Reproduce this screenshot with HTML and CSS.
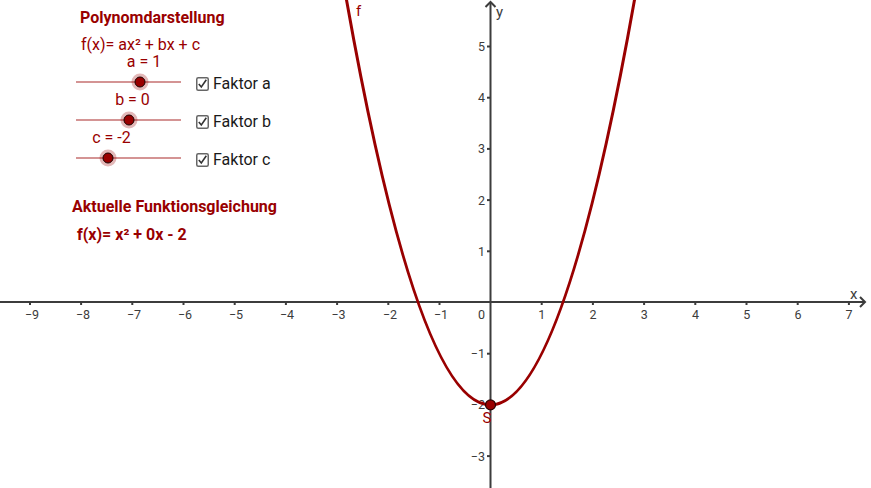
FILE: index.html
```html
<!DOCTYPE html>
<html lang="de">
<head>
<meta charset="utf-8">
<title>Polynomdarstellung</title>
<link rel="stylesheet" href="styles.css">
</head>
<body>
<div class="stage">
  <svg class="graph" width="871" height="488" viewBox="0 0 871 488" xmlns="http://www.w3.org/2000/svg">
    <g class="axes">
      <line x1="0" y1="302" x2="865" y2="302"/>
      <polyline points="860,297 865,302 860,307" fill="none"/>
      <line x1="490.5" y1="488" x2="490.5" y2="2"/>
      <polyline points="485.5,7 490.5,2 495.5,7" fill="none"/>
    </g>
    <g class="ticks">
      <line x1="30" y1="302" x2="30" y2="305"/>
      <line x1="81.1" y1="302" x2="81.1" y2="305"/>
      <line x1="132.3" y1="302" x2="132.3" y2="305"/>
      <line x1="183.5" y1="302" x2="183.5" y2="305"/>
      <line x1="234.7" y1="302" x2="234.7" y2="305"/>
      <line x1="285.9" y1="302" x2="285.9" y2="305"/>
      <line x1="337.1" y1="302" x2="337.1" y2="305"/>
      <line x1="388.3" y1="302" x2="388.3" y2="305"/>
      <line x1="439.5" y1="302" x2="439.5" y2="305"/>
      <line x1="541.7" y1="302" x2="541.7" y2="305"/>
      <line x1="592.9" y1="302" x2="592.9" y2="305"/>
      <line x1="644.1" y1="302" x2="644.1" y2="305"/>
      <line x1="695.3" y1="302" x2="695.3" y2="305"/>
      <line x1="746.5" y1="302" x2="746.5" y2="305"/>
      <line x1="797.7" y1="302" x2="797.7" y2="305"/>
      <line x1="848.9" y1="302" x2="848.9" y2="305"/>
      <line x1="487" y1="46.5" x2="490" y2="46.5"/>
      <line x1="487" y1="97.7" x2="490" y2="97.7"/>
      <line x1="487" y1="148.9" x2="490" y2="148.9"/>
      <line x1="487" y1="200.1" x2="490" y2="200.1"/>
      <line x1="487" y1="251.3" x2="490" y2="251.3"/>
      <line x1="487" y1="353.7" x2="490" y2="353.7"/>
      <line x1="487" y1="404.9" x2="490" y2="404.9"/>
      <line x1="487" y1="456.1" x2="490" y2="456.1"/>
    </g>
    <g class="xlabels">
      <text x="32" y="319">−9</text>
      <text x="83" y="319">−8</text>
      <text x="134" y="319">−7</text>
      <text x="185" y="319">−6</text>
      <text x="236" y="319">−5</text>
      <text x="287" y="319">−4</text>
      <text x="338.5" y="319">−3</text>
      <text x="390" y="319">−2</text>
      <text x="441" y="319">−1</text>
      <text x="541.7" y="319">1</text>
      <text x="593" y="319">2</text>
      <text x="644.3" y="319">3</text>
      <text x="695.5" y="319">4</text>
      <text x="746.7" y="319">5</text>
      <text x="798" y="319">6</text>
      <text x="849" y="319">7</text>
    </g>
    <g class="ylabels">
      <text x="485" y="319">0</text>
      <text x="485" y="51">5</text>
      <text x="485" y="102">4</text>
      <text x="485" y="153">3</text>
      <text x="485" y="204.5">2</text>
      <text x="485" y="255.5">1</text>
      <text x="485" y="358">−1</text>
      <text x="485" y="409">−2</text>
      <text x="485" y="460.5">−3</text>
    </g>
    <text class="axisname" x="850" y="299">x</text>
    <text class="axisname" x="496" y="17">y</text>
    <path class="curve" d="M344.58,-10.97 Q490.5,820.77 636.42,-10.97"/>
    <text class="fname" x="356" y="16">f</text>
    <circle class="vertex" cx="490.5" cy="404.9" r="5"/>
    <text class="sname" x="482.5" y="423">S</text>
  </svg>

  <div class="panel">
    <div class="title t1">Polynomdarstellung</div>
    <div class="formula">f(x)= ax² + bx + c</div>

    <div class="slider">
      <div class="slabel"><span class="val" style="left: 61%">a = 1</span></div>
      <div class="srow">
        <div class="track"><span class="knob" style="left: 61%"></span></div>
        <label class="check">
          <svg class="box" width="13" height="14" viewBox="0 0 13 14"><rect x="0.75" y="0.75" width="11.5" height="12.5" rx="1.5"/><polyline points="2.8,7 5.3,10 10.3,2.8"/></svg>
          <span>Faktor a</span>
        </label>
      </div>
    </div>

    <div class="slider">
      <div class="slabel"><span class="val" style="left: 50%">b = 0</span></div>
      <div class="srow">
        <div class="track"><span class="knob" style="left: 50%"></span></div>
        <label class="check">
          <svg class="box" width="13" height="14" viewBox="0 0 13 14"><rect x="0.75" y="0.75" width="11.5" height="12.5" rx="1.5"/><polyline points="2.8,7 5.3,10 10.3,2.8"/></svg>
          <span>Faktor b</span>
        </label>
      </div>
    </div>

    <div class="slider">
      <div class="slabel"><span class="val" style="left: 30%">c = -2</span></div>
      <div class="srow">
        <div class="track"><span class="knob" style="left: 30%"></span></div>
        <label class="check">
          <svg class="box" width="13" height="14" viewBox="0 0 13 14"><rect x="0.75" y="0.75" width="11.5" height="12.5" rx="1.5"/><polyline points="2.8,7 5.3,10 10.3,2.8"/></svg>
          <span>Faktor c</span>
        </label>
      </div>
    </div>

    <div class="title t2">Aktuelle Funktionsgleichung</div>
    <div class="current">f(x)= x² + 0x - 2</div>
  </div>
</div>
</body>
</html>
```

FILE: styles.css
```css
html, body {
  margin: 0;
  padding: 0;
  background: #ffffff;
}

body {
  width: 871px;
  height: 488px;
  overflow: hidden;
  font-family: Roboto, "Liberation Sans", sans-serif;
}

.stage {
  position: relative;
  width: 871px;
  height: 488px;
}

.graph {
  display: block;
}

.axes line,
.axes polyline {
  stroke: #3c3c3c;
  stroke-width: 2;
}

.ticks line {
  stroke: #3c3c3c;
  stroke-width: 2;
}

.xlabels text {
  font-family: Roboto, "Liberation Sans", sans-serif;
  font-size: 12.5px;
  fill: #3c3c3c;
  text-anchor: middle;
}

.ylabels text {
  font-family: Roboto, "Liberation Sans", sans-serif;
  font-size: 12.5px;
  fill: #3c3c3c;
  text-anchor: end;
}

.axisname {
  font-family: Roboto, "Liberation Sans", sans-serif;
  font-size: 15px;
  fill: #3c3c3c;
}

.curve {
  fill: none;
  stroke: #990000;
  stroke-width: 3;
}

.fname {
  font-family: Roboto, "Liberation Sans", sans-serif;
  font-size: 15px;
  fill: #990000;
}

.vertex {
  fill: #990000;
  stroke: #2a0000;
  stroke-width: 1.2;
}

.sname {
  font-family: Roboto, "Liberation Sans", sans-serif;
  font-size: 15px;
  fill: #990000;
}

/* Text panel over the canvas */
.panel {
  position: absolute;
  left: 72px;
  top: 0;
  display: flex;
  flex-direction: column;
  align-items: flex-start;
  color: #990000;
  font-size: 16px;
}

.title {
  font-weight: bold;
  line-height: 20px;
  font-size: 16px;
}

.t1 {
  margin-top: 8px;
  margin-left: 8px;
}

.formula {
  margin-top: 8px;
  margin-left: 9px;
  line-height: 18px;
}

.slider {
  display: flex;
  flex-direction: column;
  margin-left: 4px;
}

.slabel {
  position: relative;
  width: 105px;
  height: 16px;
  line-height: 16px;
}

.val {
  position: absolute;
  top: 0;
  margin-left: 4px;
  transform: translateX(-50%);
  white-space: nowrap;
}

.srow {
  display: flex;
  align-items: center;
  height: 20px;
  margin-top: 2px;
  gap: 15px;
}

.track {
  position: relative;
  width: 105px;
  height: 2px;
  background: rgba(153, 0, 0, 0.42);
}

.knob {
  position: absolute;
  top: 50%;
  border-radius: 50%;
  background: #990000;
  border: 1px solid #1a0000;
  box-shadow: 0 0 0 3px rgba(153, 0, 0, 0.28);
  transform: translate(-50%, -50%);
  box-sizing: border-box;
  width: 11px;
  height: 11px;
}

.check {
  display: flex;
  align-items: center;
  gap: 4px;
  padding-top: 4px;
  color: #1a1a1a;
  font-size: 16px;
  line-height: 20px;
}

.box {
  display: block;
}

.box rect {
  fill: #ffffff;
  stroke: #666666;
  stroke-width: 1.5;
}

.box polyline {
  fill: none;
  stroke: #333333;
  stroke-width: 1.6;
}

.t2 {
  margin-top: 29px;
  margin-left: 0;
}

.current {
  margin-top: 8px;
  margin-left: 5px;
  font-weight: bold;
  line-height: 20px;
}
```
